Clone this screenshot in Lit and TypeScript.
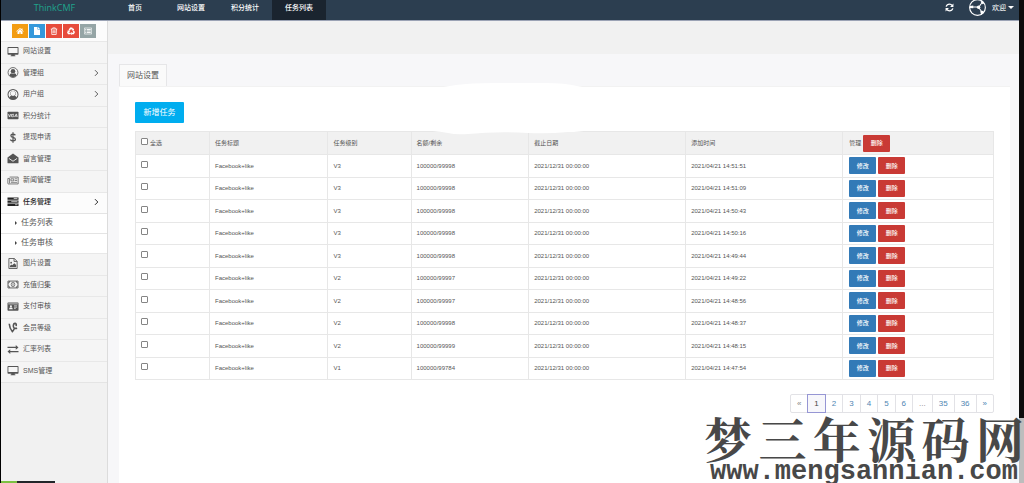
import { LitElement, html, css, svg } from "lit";
import { customElement, state } from "lit/decorators.js";

const icons: Record<string, unknown> = {
  home: svg`<path fill="currentColor" d="M8 2 0.6 8.6l1 1L8 4l6.4 5.6 1-1L13 6.5V3h-2v1.7zM8 5 3 9.4V14h4v-3.5h2V14h4V9.400z"/>`,
  file: svg`<path fill="currentColor" d="M2 0h7v5h5v11H2zM10 0l4 4h-4z"/>`,
  trash: svg`<path fill="none" stroke="currentColor" stroke-width="1.5" d="M1.500 4h13M5.500 4V1.700h5V4M3 4l.6 11h8.800L13 4M6 6.500v6M8 6.500v6M10 6.500v6"/>`,
  recycle: svg`<path fill="none" stroke="currentColor" stroke-width="3" d="M4.500 6.500 7 2.500h2.500l2 3M13 8l1.200 2.500-1.400 2.700H9M6.500 13.200H3L1.800 10.800 3.200 8"/><path fill="currentColor" d="m9.500 6.800 4.500.2V2.500zM9.500 10v6.200L6 13zM.5 7.500l4.500-1 .8 4.300z"/>`,
  list: svg`<path fill="none" stroke="currentColor" stroke-width="1.3" d="M.7 2h14.600v12H.7z"/><path stroke="currentColor" stroke-width="1.800" d="M2.500 5h1.800M5.500 5h8M2.500 8h1.800M5.500 8h8M2.500 11h1.800M5.500 11h8"/>`,
  desktop: svg`<path fill="currentColor" fill-rule="evenodd" d="M1 1.500h14a1 1 0 0 1 1 1v9.300a1 1 0 0 1-1 1h-4.500v1h1v1.200h-7v-1.200h1v-1H1a1 1 0 0 1-1-1V2.500a1 1 0 0 1 1-1zM1.300 2.800v7.400h13.400V2.800z"/>`,
  userCircle: svg`<circle cx="8" cy="8" r="7.200" fill="none" stroke="currentColor" stroke-width="1.200"/><circle cx="8" cy="6.200" r="3.300" fill="currentColor"/><path fill="currentColor" d="M2.800 12.500q.7-3 2.700-3.500 2.500 1.500 5 0 2 .5 2.700 3.500Q11 14.800 8 14.800t-5.200-2.300z"/>`,
  user: svg`<path fill="currentColor" fill-rule="evenodd" d="M8 0a8 8 0 1 1 0 16A8 8 0 0 1 8 0zm0 1.500A6.500 6.500 0 0 0 3 12.300q.8-2.300 2.300-2.600Q4 8.500 4 6.500 4 2.800 8 2.800t4 3.700q0 2-1.300 3.200 1.500.3 2.300 2.600A6.500 6.500 0 0 0 8 1.500z"/><circle cx="8" cy="6.500" r="3.600" fill="#f5f5f5"/>`,
  visa: svg`<rect y="2.500" width="16" height="11" rx="1" fill="currentColor"/><path fill="none" stroke="#fff" stroke-width="1.100" d="m1.500 6 1.300 4L4.500 6M6 6l-.7 4.200M9.300 6.400Q7 5.700 7.200 7.200q2 .9 1.700 2Q8.400 10.500 6.800 9.700M10.300 10.200 12.500 6h.6l1 4.200M11.300 8.800h2.200"/>`,
  dollar: svg`<path fill="none" stroke="currentColor" stroke-width="1.800" d="M11.500 4.700Q10 3 8 3 5 3 5 5.300 5 7 8 7.800q3.500.9 3.500 2.900Q11.500 13 8 13q-2.500 0-4-2M8 .5v15"/>`,
  envelope: svg`<path fill="currentColor" d="M0 6.500 8 .8l8 5.700V14a1 1 0 0 1-1 1H1a1 1 0 0 1-1-1z"/><path fill="none" stroke="#f4f4f4" stroke-width="1.300" d="M2 7.800 8 12l6-4.200"/>`,
  news: svg`<path fill="none" stroke="currentColor" stroke-width="1.100" d="M3 3h12.500v10H1.200Q.5 13 .5 12V5H3v7"/><path fill="none" stroke="currentColor" d="M5 5.500h4v3H5zM10.500 5.500H14M10.500 8H14M5 10.700h9"/>`,
  tasks: svg`<path fill="currentColor" d="M0 2h16v3.400H0zM0 6.500h16v3.400H0zM0 11h16v3.400H0z"/><path stroke="#fff" stroke-width="1" d="M9 3.700h5.500M5.500 8.200h9M11 12.700h3.500"/>`,
  image: svg`<path fill="none" stroke="currentColor" stroke-width="1.300" d="M2 .7h8L14 5v10.300H2zM9.500.7V5H14"/><path fill="currentColor" d="M3.500 13.500v-2l2-2 1.300 1.200L10 7.500l2.500 2.800v3.200z"/><circle cx="5.300" cy="6.800" r="1.300" fill="currentColor"/>`,
  money: svg`<path fill="none" stroke="currentColor" stroke-width="1.300" d="M.7 3h14.600v10H.7zM.7 6Q3 6 3.300 3M12.700 3Q13 6 15.300 6M.7 10q2.300 0 2.600 3M12.700 13q.3-3 2.600-3"/><ellipse cx="8" cy="8" rx="2.600" ry="3.300" fill="none" stroke="currentColor"/><path stroke="currentColor" d="M8 6v4"/>`,
  idcard: svg`<rect y="2" width="16" height="12" rx="1" fill="currentColor"/><path stroke="#f4f4f4" d="M1 4.200h14M9.500 7H14M9.500 9H14M9.500 11H12"/><circle cx="5" cy="7.500" r="1.500" fill="#f4f4f4"/><path fill="#f4f4f4" d="M2.300 12q0-2.800 2.700-2.800T7.700 12z"/>`,
  vine: svg`<path fill="none" stroke="currentColor" stroke-width="2.300" d="M2.500 2.500Q3 9 7 14q2-2 3-4.500Q8 7.500 8.500 4.500 9 1.800 11.200 2q2.300.5 1.300 4M9.500 8.500q2 1.300 4.500.5"/>`,
  exchange: svg`<path stroke="currentColor" stroke-width="1.700" d="M0 5h13M3 11h13"/><path fill="currentColor" d="M12 1.500 16 5l-4 3.500zM4 7.500 0 11l4 3.500z"/>`,
  refresh: svg`<path fill="none" stroke="currentColor" stroke-width="2.300" d="M2 6.500Q3.500 2 8 2q3 0 5 2.500M14 9.500Q12.500 14 8 14q-3 0-5-2.500"/><path fill="currentColor" d="M15 1v6H9zM1 15V9h6z"/>`,
  avatar: svg`<circle cx="8" cy="8" r="7.400" fill="none" stroke="currentColor" stroke-width="1.100"/><path fill="none" stroke="currentColor" d="M3 7.500h6M9 8l3.500-5M9 8l3.500 4.500"/><circle cx="9" cy="7.800" r="1.600" fill="currentColor"/><path fill="currentColor" d="M.8 6.500 4 6.200v2.600l-3.200-.3zM10.800 2.600l1.600-1 2 2.500-1.600.8zM10.500 11.500l2.800-.5.7 2-2.500 2z"/>`,
  chevron: svg`<path fill="none" stroke="currentColor" stroke-width="2.200" d="m4.500 1.500 6.500 6.500-6.500 6.500"/>`,
};

const icon = (name: string, cls = "") =>
  html`<svg class="icon ${cls}" viewBox="0 0 16 16" aria-hidden="true">${icons[name]}</svg>`;

interface Entry { icon: string; label: string; more?: boolean; active?: boolean; children?: string[]; }

const menu: Entry[] = [
  { icon: "desktop", label: "网站设置" },
  { icon: "userCircle", label: "管理组", more: true },
  { icon: "user", label: "用户组", more: true },
  { icon: "visa", label: "积分统计" },
  { icon: "dollar", label: "提现申请" },
  { icon: "envelope", label: "留言管理" },
  { icon: "news", label: "新闻管理" },
  { icon: "tasks", label: "任务管理", more: true, active: true, children: ["任务列表", "任务审核"] },
  { icon: "image", label: "图片设置" },
  { icon: "money", label: "充值归集" },
  { icon: "idcard", label: "支付审核" },
  { icon: "vine", label: "会员等级" },
  { icon: "exchange", label: "汇率列表" },
  { icon: "desktop", label: "SMS管理" },
];

const tasks = [
  ["V3", "100000/99998", "14:51:51"],
  ["V3", "100000/99998", "14:51:09"],
  ["V3", "100000/99998", "14:50:43"],
  ["V3", "100000/99998", "14:50:16"],
  ["V3", "100000/99998", "14:49:44"],
  ["V2", "100000/99997", "14:49:22"],
  ["V2", "100000/99997", "14:48:56"],
  ["V2", "100000/99998", "14:48:37"],
  ["V2", "100000/99999", "14:48:15"],
  ["V1", "100000/99784", "14:47:54"],
];

@customElement("app-root")
export class AppRoot extends LitElement {
  @state() private checked = new Set<number>();

  static styles = css`
    :host {
      display: block;
      position: relative;
      overflow: hidden;
      font: 7px/10px "Liberation Sans", "Noto Sans CJK SC", sans-serif;
      color: #555;
    }
    * { box-sizing: border-box; }
    a { color: inherit; text-decoration: none; }
    button { font: inherit; color: inherit; border: 0; padding: 0; cursor: pointer; }
    ul { list-style: none; margin: 0; padding: 0; }
    .icon { display: block; width: 10px; height: 10px; flex: none; }

    .frame {
      display: flex;
      flex-direction: column;
      min-height: 100vh;
      border-left: 1px solid #000;
      border-right: 5px solid #0c0c0c;
      background: #f7f7f9;
    }
    .navbar {
      display: flex;
      height: 21px;
      background: #2c3e50;
      border-bottom: 1px solid #9ba3b5;
      color: #fff;
      line-height: 15px;
    }
    .brand {
      width: 107px;
      text-align: center;
      color: #1fa38c;
      font-family: "Open Sans", sans-serif;
      font-size: 9px;
    }
    .nav { display: flex; flex: 1; padding-left: 7px; }
    .nav a { padding: 0 13px; font-weight: 500; }
    .nav a:first-child { margin-right: 9px; }
    .nav .current { background: #1a242f; }
    .account { display: flex; align-items: center; height: 15px; padding-right: 5px; }
    .account button { display: flex; align-items: center; background: none; }
    .account .reload { margin-right: 15px; }
    .icon.small { width: 9px; height: 9px; }
    .icon.face { width: 17px; height: 17px; margin-right: 6px; }
    .caret {
      border: 3px solid transparent;
      border-top-color: #fff;
      border-bottom: 0;
      margin-left: 2px;
    }

    .body { display: flex; flex: 1; }
    .sidebar {
      width: 107px;
      flex: none;
      background: #f1f1f1;
      border-right: 1px solid #dcdcdc;
    }
    .shortcuts {
      display: flex;
      gap: 1px;
      height: 20px;
      padding: 3px 0 0 11px;
      background: #fcfcfc;
    }
    .shortcuts button {
      display: grid;
      place-items: center;
      width: 16px;
      height: 14px;
      color: #fff;
    }
    .shortcuts .icon { width: 8px; height: 8px; }
    .orange { background: #f39c12; }
    .blue { background: #3498db; }
    .red { background: #e74c3c; }
    .grey { background: #95a5a6; }

    .entry {
      display: flex;
      align-items: center;
      height: 22px;
      padding: 0 7px 3px 6px;
      border-top: 1px solid #e8e8e8;
      background: #f5f5f5;
    }
    .menu > li:nth-child(even) .entry { height: 21px; }
    .menu > li:last-child .entry { border-bottom: 1px solid #e4e4e4; height: 22px; }
    .entry .icon { width: 12px; height: 11px; margin-right: 4px; }
    .entry .icon.more { width: 7px; height: 8px; margin: 0 0 0 auto; }
    .entry.active { background: #fcfcfc; color: #222; font-weight: 500; }
    .sub {
      display: flex;
      align-items: center;
      height: 20px;
      padding: 0 0 2px 14px;
      gap: 4px;
      border-top: 1px solid #e4e4e4;
      background: #fff;
      font-size: 8px;
    }
    .sub::before {
      content: "";
      border: 2px solid transparent;
      border-left-color: #444;
      border-right: 0;
    }

    .content { flex: 1; min-width: 0; display: flex; flex-direction: column; }
    .crumbs { height: 33px; background: #f1f1f1; }
    .tabs { display: flex; padding: 10px 11px 0; font-size: 8px; }
    .tabs a {
      height: 22px;
      line-height: 21px;
      padding: 0 7px;
      background: #fafafa;
      border: 1px solid #e6e6e8;
      border-bottom: 0;
    }
    .panel {
      flex: 1;
      margin: 0 9px 0 11px;
      padding: 15px 16px;
      background: #fff;
      border-top: 1px solid #f2f2f2;
    }
    .add {
      display: block;
      width: 49px;
      height: 21px;
      margin-bottom: 8px;
      border-radius: 1px;
      background: #00adef;
      color: #fff;
      font-size: 8px;
    }
    table {
      width: 100%;
      height: 249px;
      border-collapse: collapse;
      table-layout: fixed;
      font-size: 6px;
      line-height: 10px;
    }
    tr { height: 22px; }
    th, td {
      padding: 0 5px;
      border: 1px solid #e7e7e7;
      text-align: left;
      font-weight: 400;
      vertical-align: middle;
    }
    th:last-child, td:last-child { padding-left: 6px; }
    thead tr { height: 23px; }
    th { background: #f1f1f1; }
    .c-check { width: 74px; }
    .c-title { width: 13.8%; }
    .c-level { width: 9.7%; }
    .c-quota { width: 13.7%; }
    .c-date { width: 18.3%; }
    input {
      appearance: none;
      width: 7px;
      height: 7px;
      margin: 0 2px 0 0;
      border: 1px solid #858585;
      border-radius: 1px;
      background: #fff;
    }
    input:checked { background: #337ab7; }
    .check { display: flex; height: 10px; }
    .actions { display: flex; align-items: center; gap: 2px; }
    .actions button {
      width: 27px;
      height: 17px;
      border-radius: 1px;
      color: #fff;
      font-weight: 500;
    }
    .edit { background: #337ab7; }
    .remove { background: #c93a35; }

    .pages {
      display: flex;
      justify-content: flex-end;
      margin-top: 14px;
      font-size: 8px;
      line-height: 17px;
      color: #4f86b3;
    }
    .pages li { border: 1px solid #e2e2e6; margin-left: -1px; padding: 0 6px; }
    .pages li:first-child { border-radius: 2px 0 0 2px; }
    .pages li:last-child { border-radius: 0 2px 2px 0; }
    .pages .muted { color: #888; }
    .pages .here { position: relative; border-color: #9696d4; background: #f7f7fb; color: #444; }

    .smear { position: absolute; left: 410px; top: 82px; width: 180px; height: 54px; }
    .mark {
      position: absolute;
      right: 0;
      bottom: 0;
      width: 320px;
      height: 65px;
      color: #484848;
      white-space: nowrap;
      background: linear-gradient(#bdbdbd, #bdbdbd) right / 5px 100% no-repeat;
    }
    .mark-name {
      display: flex;
      justify-content: space-between;
      height: 47px;
      font: 700 48px/47px "Liberation Serif", "Noto Serif CJK SC", "Noto Sans CJK SC", serif;
    }
    .mark-url {
      font: 700 27px/15px "Liberation Mono", monospace;
      text-align: center;
    }
    .status {
      position: absolute;
      left: 1px;
      bottom: 0;
      width: 54px;
      height: 2px;
      background: linear-gradient(90deg, #7cc142 16px, #22262a 16px);
    }
  `;

  private toggle(i: number) {
    const next = new Set(this.checked);
    next.has(i) ? next.delete(i) : next.add(i);
    this.checked = next;
  }

  private toggleAll() {
    this.checked = this.checked.size === tasks.length ? new Set() : new Set(tasks.map((_, i) => i));
  }

  private renderEntry(e: Entry) {
    return html`<li>
      <a href="#" class="entry ${e.active ? "active" : ""}">
        ${icon(e.icon)}<span>${e.label}</span>${e.more ? icon("chevron", "more") : ""}
      </a>
      ${e.children ? html`<ul>${e.children.map((c) => html`<li><a href="#" class="sub">${c}</a></li>`)}</ul>` : ""}
    </li>`;
  }

  render() {
    return html`
      <div class="frame">
        <header class="navbar">
          <a href="#" class="brand">ThinkCMF</a>
          <nav class="nav">
            <a href="#">首页</a><a href="#">网站设置</a><a href="#">积分统计</a><a href="#" class="current">任务列表</a>
          </nav>
          <div class="account">
            <button class="reload" aria-label="刷新">${icon("refresh", "small")}</button>
            <button>${icon("avatar", "face")}欢迎<span class="caret"></span></button>
          </div>
        </header>
        <div class="body">
          <aside class="sidebar">
            <div class="shortcuts">
              <button class="orange" aria-label="首页">${icon("home")}</button>
              <button class="blue" aria-label="文件">${icon("file")}</button>
              <button class="red" aria-label="删除">${icon("trash")}</button>
              <button class="red" aria-label="回收">${icon("recycle")}</button>
              <button class="grey" aria-label="列表">${icon("list")}</button>
            </div>
            <ul class="menu">${menu.map((e) => this.renderEntry(e))}</ul>
          </aside>
          <main class="content">
            <div class="crumbs"></div>
            <div class="tabs"><a href="#">网站设置</a></div>
            <section class="panel">
              <button class="add">新增任务</button>
              <table>
                <colgroup>
                  <col class="c-check"><col class="c-title"><col class="c-level"><col class="c-quota">
                  <col class="c-date"><col class="c-date"><col>
                </colgroup>
                <thead>
                  <tr>
                    <th><label class="check"><input type="checkbox" .checked=${this.checked.size === tasks.length} @change=${this.toggleAll}>全选</label></th>
                    <th>任务标题</th><th>任务级别</th><th>名额/剩余</th><th>截止日期</th><th>添加时间</th>
                    <th><div class="actions">管理<button class="remove">删除</button></div></th>
                  </tr>
                </thead>
                <tbody>
                  ${tasks.map(([level, quota, time], i) => html`<tr>
                    <td><div class="check"><input type="checkbox" aria-label="选择" .checked=${this.checked.has(i)} @change=${() => this.toggle(i)}></div></td>
                    <td>Facebook+like</td><td>${level}</td><td>${quota}</td>
                    <td>2021/12/31 00:00:00</td><td>2021/04/21 ${time}</td>
                    <td><div class="actions"><button class="edit">修改</button><button class="remove">删除</button></div></td>
                  </tr>`)}
                </tbody>
              </table>
              <ul class="pages">
                <li class="muted">«</li><li class="here">1</li>
                ${["2", "3", "4", "5", "6"].map((p) => html`<li><a href="#">${p}</a></li>`)}
                <li class="muted">...</li>
                ${["35", "36", "»"].map((p) => html`<li><a href="#">${p}</a></li>`)}
              </ul>
            </section>
          </main>
        </div>
      </div>
      <svg class="smear" viewBox="0 0 180 54" aria-hidden="true">
        <path fill="#fff" d="M46 3Q60 1 85 1q25 0 50 0 20 0 32 3l11 2v42q-8 2-20 2-20 2-40 1-30-2-60 1-12 1-20-1-12-2-28-3L2 48V10z"/>
      </svg>
      <div class="status"></div>
      <div class="mark">
        <div class="mark-name">${[..."梦三年源码网"].map((c) => html`<span>${c}</span>`)}</div>
        <div class="mark-url">www.mengsannian.com</div>
      </div>
    `;
  }
}
